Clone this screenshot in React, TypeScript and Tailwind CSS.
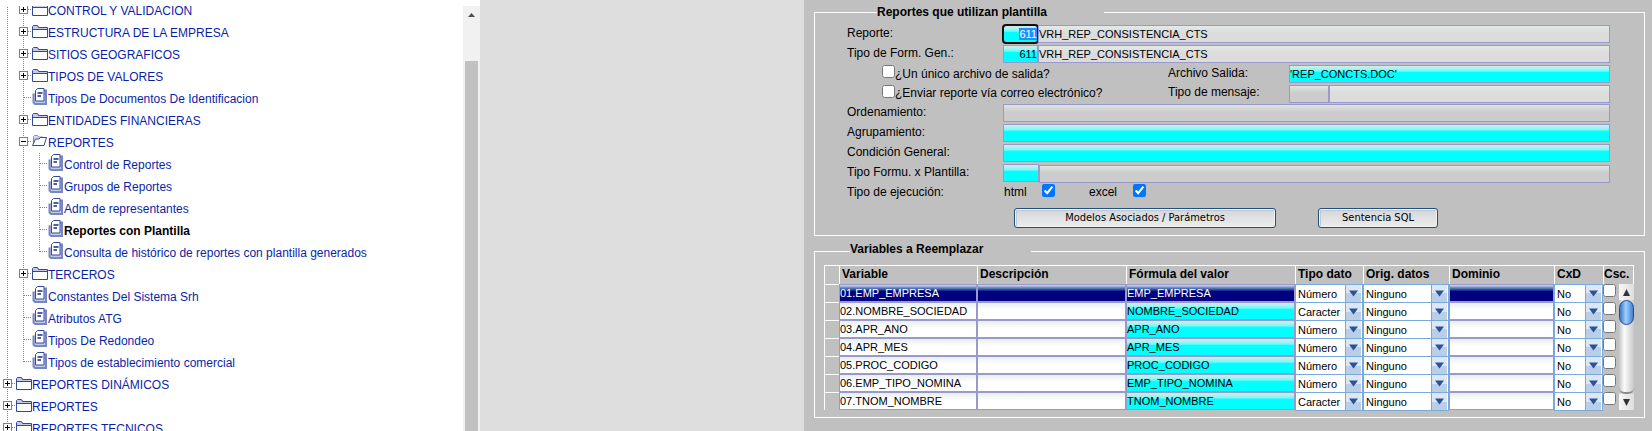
import { useEffect, useRef, useState } from "react";

type Line = "none" | "full" | "last";
type Kind = "closed" | "open" | "doc";
interface TreeNode {
  text: string;
  kind: Kind;
  depth: number;
  last?: boolean;
  current?: boolean;
}

const nodes: TreeNode[] = [
  { text: "CONTROL Y VALIDACION", kind: "closed", depth: 1 },
  { text: "ESTRUCTURA DE LA EMPRESA", kind: "closed", depth: 1 },
  { text: "SITIOS GEOGRAFICOS", kind: "closed", depth: 1 },
  { text: "TIPOS DE VALORES", kind: "closed", depth: 1 },
  { text: "Tipos De Documentos De Identificacion", kind: "doc", depth: 1 },
  { text: "ENTIDADES FINANCIERAS", kind: "closed", depth: 1 },
  { text: "REPORTES", kind: "open", depth: 1 },
  { text: "Control de Reportes", kind: "doc", depth: 2 },
  { text: "Grupos de Reportes", kind: "doc", depth: 2 },
  { text: "Adm de representantes", kind: "doc", depth: 2 },
  { text: "Reportes con Plantilla", kind: "doc", depth: 2, current: true },
  { text: "Consulta de histórico de reportes con plantilla generados", kind: "doc", depth: 2, last: true },
  { text: "TERCEROS", kind: "closed", depth: 1 },
  { text: "Constantes Del Sistema Srh", kind: "doc", depth: 1 },
  { text: "Atributos ATG", kind: "doc", depth: 1 },
  { text: "Tipos De Redondeo", kind: "doc", depth: 1 },
  { text: "Tipos de establecimiento comercial", kind: "doc", depth: 1, last: true },
  { text: "REPORTES DINÁMICOS", kind: "closed", depth: 0 },
  { text: "REPORTES", kind: "closed", depth: 0 },
  { text: "REPORTES TECNICOS", kind: "closed", depth: 0 },
];

function Branch({ line, arm, toggle }: { line: Line; arm?: boolean; toggle?: Kind }) {
  return (
    <svg width="16" height="22" className="shrink-0" shapeRendering="crispEdges" aria-hidden="true">
      {line !== "none" && (
        <line x1="7.5" y1="0" x2="7.5" y2={line === "last" ? 12 : 22} stroke="#808080" strokeDasharray="1 1" />
      )}
      {arm && <line x1="8" y1="10.5" x2="16" y2="10.5" stroke="#808080" strokeDasharray="1 1" />}
      {toggle && toggle !== "doc" && (
        <>
          <rect x="3.5" y="6.5" width="8" height="8" fill="#fff" stroke="#808080" />
          <path d={toggle === "open" ? "M5 10.5h5" : "M5 10.5h5M7.5 8v5"} stroke="#000" />
        </>
      )}
    </svg>
  );
}

function NodeIcon({ kind }: { kind: Kind }) {
  return (
    <svg width="16" height="22" className="shrink-0" fill="none" aria-hidden="true">
      {kind === "closed" && (
        <>
          <path d="M1 5h6v3H1z" fill="#c3cbe6" />
          <path d="M7 7h8v1H7z" fill="#c3cbe6" />
          <path d="M.5 16.5V5.5l1-1h4l1 2h9v10z" stroke="#31499a" />
          <path d="M1 8.5h14" stroke="#31499a" />
        </>
      )}
      {kind === "open" && (
        <>
          <path d="M1.5 14V5.5l1-1h3l1 1.5h4V8" fill="#d7dcef" stroke="#7d8cc0" />
          <path d="M.5 14.5l3-6.500h3.500l1.500-1.500h6l-2.500 8z" fill="#fff" stroke="#31499a" />
        </>
      )}
      {kind === "doc" && (
        <>
          <path d="M1.500 6.500v9l1.500 1.500h11V3.500h-2" fill="#c3cbe6" stroke="#7887c2" strokeWidth="2" />
          <path d="M3.500 3.500l2-2h6.500v12.500h-8.500z" fill="#fff" stroke="#31499a" />
          <path d="M5.500 6h5M5.500 9h3.500" stroke="#4a60a8" strokeWidth="2" />
        </>
      )}
    </svg>
  );
}

function TreeRow({ node }: { node: TreeNode }) {
  const cells = [];
  for (let i = 0; i < node.depth; i++) cells.push(<Branch key={i} line="full" />);
  return (
    <li className="flex h-[22px]">
      {cells}
      <Branch line={node.last ? "last" : "full"} arm toggle={node.kind} />
      <NodeIcon kind={node.kind} />
      <a
        href="#"
        className={
          node.current
            ? "whitespace-nowrap leading-6 font-bold text-black"
            : "whitespace-nowrap leading-6 text-[#0a1fa8]"
        }
      >
        {node.text}
      </a>
    </li>
  );
}

const fieldBase = "block h-[18px] min-w-0 border border-[#9999cc] text-[11px] text-black outline-none";
const gray = fieldBase + " bg-linear-to-b from-[#e4e9e9] via-[#dcdcdc] via-45% to-[#dcdcdc]";
const dim = fieldBase + " bg-linear-to-b from-[#e0e4e4] via-[#cccccc] via-45% to-[#cccccc]";
const cyan = fieldBase + " bg-linear-to-b from-[#d5e9ea] via-[#00ffff] via-40% to-[#00ffff]";
const label = "w-[156px] shrink-0 whitespace-nowrap";
const check = "m-0 size-[13px] shrink-0";

function FocusedCode() {
  const ref = useRef<HTMLInputElement>(null);
  useEffect(() => {
    ref.current?.focus();
    ref.current?.select();
  }, []);
  return (
    <input
      id="reporte"
      ref={ref}
      defaultValue="611"
      className={
        cyan +
        " w-[35px] rounded-[3px] text-right outline-2 outline-solid -outline-offset-1 outline-[#101010] selection:bg-[#1e90ff] selection:text-white"
      }
    />
  );
}

function ReportForm() {
  return (
    <fieldset className="min-w-0 border border-white pr-[34px] pb-[7px] pl-8">
      <legend className="ml-[30px] h-[18px] w-[227px] text-[12px] leading-[18px] font-bold">
        Reportes que utilizan plantilla
      </legend>
      <div className="pt-1">
        <div className="flex h-5">
          <label htmlFor="reporte" className={label}>Reporte:</label>
          <FocusedCode />
          <input aria-label="Nombre del reporte" readOnly defaultValue="VRH_REP_CONSISTENCIA_CTS" className={gray + " flex-1"} />
        </div>
        <div className="flex h-5">
          <label htmlFor="form" className={label}>Tipo de Form. Gen.:</label>
          <input id="form" defaultValue="611" className={cyan + " w-[35px] text-right"} />
          <input aria-label="Nombre del formato" readOnly defaultValue="VRH_REP_CONSISTENCIA_CTS" className={gray + " flex-1"} />
        </div>
        <div className="flex h-5">
          <div className="flex w-[321px] shrink-0 pl-[35px]">
            <input id="unico" type="checkbox" className={check} />
            <label htmlFor="unico" className="whitespace-nowrap leading-[18px]">¿Un único archivo de salida?</label>
          </div>
          <label htmlFor="archivo" className="w-[121px] shrink-0">Archivo Salida:</label>
          <input id="archivo" defaultValue="'REP_CONCTS.DOC'" className={cyan + " flex-1"} />
        </div>
        <div className="flex h-[19px]">
          <div className="flex w-[321px] shrink-0 pl-[35px]">
            <input id="correo" type="checkbox" className={check} />
            <label htmlFor="correo" className="whitespace-nowrap">¿Enviar reporte vía correo electrónico?</label>
          </div>
          <label htmlFor="mensaje" className="w-[121px] shrink-0 leading-[14px]">Tipo de mensaje:</label>
          <input id="mensaje" className={dim + " w-10"} />
          <input aria-label="Descripción del mensaje" readOnly className={gray + " flex-1"} />
        </div>
        <div className="flex h-5">
          <label htmlFor="orden" className={label}>Ordenamiento:</label>
          <input id="orden" className={dim + " flex-1"} />
        </div>
        <div className="flex h-5">
          <label htmlFor="grupo" className={label}>Agrupamiento:</label>
          <input id="grupo" className={cyan + " flex-1"} />
        </div>
        <div className="flex h-5">
          <label htmlFor="cond" className={label}>Condición General:</label>
          <input id="cond" className={cyan + " flex-1"} />
        </div>
        <div className="flex h-5">
          <label htmlFor="formu" className={label}>Tipo Formu. x Plantilla:</label>
          <input id="formu" className={cyan + " w-9"} />
          <input aria-label="Descripción de la plantilla" readOnly className={dim + " mt-px flex-1"} />
        </div>
        <div className="flex h-5">
          <span className={label}>Tipo de ejecución:</span>
          <label htmlFor="html" className="w-[39px] pl-px">html</label>
          <input id="html" type="checkbox" defaultChecked className={check} />
          <label htmlFor="excel" className="ml-[34px] w-11">excel</label>
          <input id="excel" type="checkbox" defaultChecked className={check} />
        </div>
        <div className="flex gap-[42px] pt-1 pl-[167px]">
          <FormButton text="Modelos Asociados / Parámetros" width="w-[262px]" />
          <FormButton text="Sentencia SQL" width="w-[120px]" />
        </div>
      </div>
    </fieldset>
  );
}

function FormButton({ text, width }: { text: string; width: string }) {
  return (
    <button
      type="button"
      className={
        width +
        " h-5 rounded-[3px] border border-[#1d4f80] bg-linear-to-b from-[#d3d6d8] to-[#ececec] font-['DejaVu_Sans_Condensed','DejaVu_Sans',sans-serif] text-[11px] leading-4 whitespace-nowrap shadow-[inset_0_0_0_1px_#f4f4f4,inset_2px_2px_0_0_#c4c6cc]"
      }
    >
      {text}
    </button>
  );
}

const rows = [
  ["01.EMP_EMPRESA", "EMP_EMPRESA", "Número"],
  ["02.NOMBRE_SOCIEDAD", "NOMBRE_SOCIEDAD", "Caracter"],
  ["03.APR_ANO", "APR_ANO", "Número"],
  ["04.APR_MES", "APR_MES", "Número"],
  ["05.PROC_CODIGO", "PROC_CODIGO", "Número"],
  ["06.EMP_TIPO_NOMINA", "EMP_TIPO_NOMINA", "Número"],
  ["07.TNOM_NOMBRE", "TNOM_NOMBRE", "Caracter"],
];

const cellBase = "block h-[18px] w-full border border-[#9999cc] text-[11px] outline-none";
const cellWhite = cellBase + " text-black bg-linear-to-b from-[#e9eeee] via-white via-45% to-white";
const cellCyan = cellBase + " text-black bg-linear-to-b from-[#d5e9ea] via-[#00ffff] via-40% to-[#00ffff]";
const cellNavy = cellBase + " text-white bg-linear-to-b from-[#dcdce6] via-[#000080] via-40% to-[#000080]";
const headBase = "h-[19px] border-t border-l border-white text-left align-top text-[12px] leading-4 font-bold whitespace-nowrap";
const head = headBase + " pl-[2px]";

function Picker({ options, name }: { options: string[]; name: string }) {
  const [value, setValue] = useState(options[0]);
  return (
    <div className="relative h-[18px]">
      <select
        aria-label={name}
        value={value}
        onChange={(e) => setValue(e.target.value)}
        className="block h-[19px] w-full appearance-none border border-[#7aaadb] bg-white pl-[2px] text-[11px] leading-4 text-black outline-none"
      >
        {options.map((o) => (
          <option key={o}>{o}</option>
        ))}
      </select>
      <span className="pointer-events-none absolute top-px right-[2px] flex h-[17px] w-4 items-center justify-center border-l border-[#7aaadb] bg-linear-to-b from-[#dbe7f4] from-50% to-[#b9cfe9] to-50%">
        <svg width="9" height="7" aria-hidden="true">
          <path d="M0 .5h9L4.500 6.500z" fill="#2c5196" />
        </svg>
      </span>
    </div>
  );
}

function GridScroll() {
  return (
    <div className="flex h-[126px] w-[15px] flex-col bg-linear-to-r from-[#c4c4c4] via-[#fbfbfb] via-35% to-[#c8c8c8]">
      <button type="button" aria-label="Subir" className="flex h-4 items-center justify-center bg-linear-to-r from-[#f8f8f8] to-[#dedede]">
        <svg width="7" height="7"><path d="M3.500 0L7 7H0z" fill="#333" /></svg>
      </button>
      <div className="h-[25px] rounded-full border border-[#234a94] bg-linear-to-r from-[#3d74c8] via-[#9fd0fb] via-45% to-[#3f7fd6]" />
      <div className="mt-px flex-1 rounded-b-[6px] border-b-2 border-[#8c8c8c]" />
      <button type="button" aria-label="Bajar" className="flex h-4 items-center justify-center bg-linear-to-r from-[#f8f8f8] to-[#dedede]">
        <svg width="7" height="7"><path d="M0 0h7L3.500 7z" fill="#333" /></svg>
      </button>
    </div>
  );
}

function VariablesGrid() {
  return (
    <fieldset className="min-w-0 border border-white pr-[10px] pb-[7px] pl-[9px]">
      <legend className="ml-[26px] h-[18px] w-[181px] text-[12px] leading-[14px] font-bold">
        Variables a Reemplazar
      </legend>
      <table className="mt-[5px] w-full table-fixed border-separate border-spacing-0">
        <colgroup>
          <col className="w-[15px]" />
          <col className="w-[138px]" />
          <col className="w-[149px]" />
          <col className="w-[169px]" />
          <col className="w-[68px]" />
          <col className="w-[86px]" />
          <col className="w-[105px]" />
          <col className="w-[49px]" />
          <col className="w-4" />
          <col className="w-[15px]" />
        </colgroup>
        <thead>
          <tr>
            <td className={head} />
            <th className={head}>Variable</th>
            <th className={head}>Descripción</th>
            <th className={head}>Fórmula del valor</th>
            <th className={head}>Tipo dato</th>
            <th className={head}>Orig. datos</th>
            <th className={head}>Dominio</th>
            <th className={head}>CxD</th>
            <th colSpan={2} className={headBase + " border-r pl-0"}>Csc.</th>
          </tr>
        </thead>
        <tbody>
          {rows.map(([variable, formula, tipo], i) => (
            <tr key={variable} className="h-[18px]">
              <td className="border-t border-l border-white p-0" />
              <td className="p-0">
                <input aria-label="Variable" defaultValue={variable} className={i ? cellWhite : cellNavy} />
              </td>
              <td className="p-0">
                <input aria-label="Descripción" className={i ? cellWhite : cellNavy} />
              </td>
              <td className="p-0">
                <input aria-label="Fórmula del valor" defaultValue={formula} className={i ? cellCyan : cellNavy} />
              </td>
              <td className="p-0">
                <Picker name="Tipo dato" options={tipo === "Número" ? ["Número", "Caracter"] : ["Caracter", "Número"]} />
              </td>
              <td className="p-0">
                <Picker name="Orig. datos" options={["Ninguno"]} />
              </td>
              <td className="p-0">
                <input aria-label="Dominio" className={i ? cellWhite : cellNavy} />
              </td>
              <td className="p-0">
                <Picker name="CxD" options={["No", "Sí"]} />
              </td>
              <td className="p-0 align-top">
                <input type="checkbox" aria-label="Csc." className="m-0 block size-[13px]" />
              </td>
              {i === 0 && (
                <td rowSpan={7} className="p-0 align-top">
                  <GridScroll />
                </td>
              )}
            </tr>
          ))}
        </tbody>
      </table>
    </fieldset>
  );
}

export default function App() {
  return (
    <div className="grid h-screen grid-cols-[480px_minmax(0,324fr)_minmax(0,848fr)] overflow-hidden bg-[#dedede] font-['Liberation_Sans',Arial,sans-serif] text-[12px] leading-4 text-black">
      <nav aria-label="Menú" className="flex min-h-0 bg-white pt-[6px]">
        <div className="min-w-0 flex-1 overflow-hidden">
          <ul className="-mt-[7px]">
            {nodes.map((node, i) => (
              <TreeRow key={i} node={node} />
            ))}
          </ul>
        </div>
        <div className="flex w-[17px] flex-col bg-[#f1f1f1]">
          <svg width="17" height="55" className="shrink-0" aria-hidden="true">
            <path d="M5 11l3.500-4 3.500 4z" fill="#505050" />
          </svg>
          <div className="mx-[2px] flex-1 bg-[#c1c1c1]" />
        </div>
      </nav>
      <div />
      <main className="min-w-0 bg-[#c0c0c0] pt-[3px] pr-[7px] pl-[10px]">
        <ReportForm />
        <div className="pt-[6px]">
          <VariablesGrid />
        </div>
      </main>
    </div>
  );
}
